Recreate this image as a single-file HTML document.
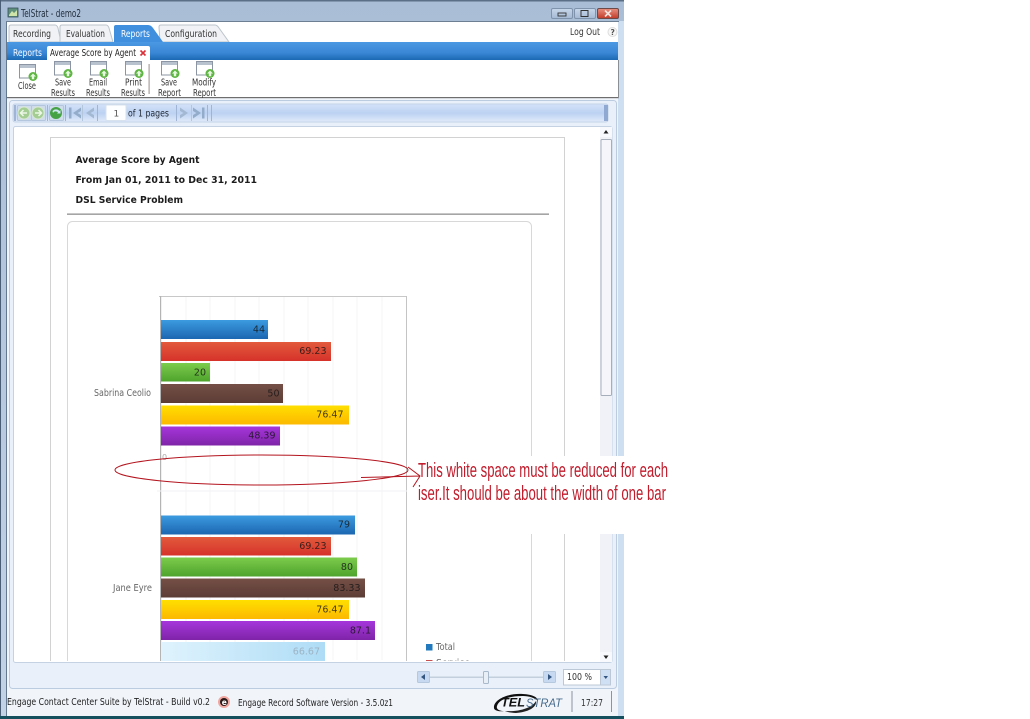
<!DOCTYPE html>
<html><head><meta charset="utf-8"><title>TelStrat - demo2</title>
<style>
html,body{margin:0;padding:0;background:#fff;width:1030px;height:719px;overflow:hidden}
svg{display:block}
text{font-family:"DejaVu Sans",sans-serif;font-size:9.5px;fill:#333}
.b{font-weight:bold;fill:#1c1c1c;font-size:10px}
.v{fill:#141414;font-size:9.5px;opacity:.8}
</style></head><body>
<svg width="1030" height="719" viewBox="0 0 1030 719" xmlns="http://www.w3.org/2000/svg">
<defs>
<linearGradient id="fr" x1="0" y1="0" x2="0" y2="1"><stop offset="0" stop-color="#a9bdd6"/><stop offset="1" stop-color="#c3d3e6"/></linearGradient>
<linearGradient id="band" x1="0" y1="0" x2="0" y2="1"><stop offset="0" stop-color="#4b98e4"/><stop offset=".6" stop-color="#3a87d6"/><stop offset="1" stop-color="#1b68b4"/></linearGradient>
<linearGradient id="pager" x1="0" y1="0" x2="0" y2="1"><stop offset="0" stop-color="#d3e2f8"/><stop offset=".5" stop-color="#bcd2f2"/><stop offset="1" stop-color="#e1ebfa"/></linearGradient>
<linearGradient id="cl" x1="0" y1="0" x2="0" y2="1"><stop offset="0" stop-color="#e89080"/><stop offset="1" stop-color="#c23a28"/></linearGradient>
<linearGradient id="btn" x1="0" y1="0" x2="0" y2="1"><stop offset="0" stop-color="#c8d7ea"/><stop offset="1" stop-color="#a4b9d3"/></linearGradient>
<linearGradient id="g0" x1="0" y1="0" x2="0" y2="1"><stop offset="0" stop-color="#3c9be0"/><stop offset="1" stop-color="#1c66b0"/></linearGradient>
<linearGradient id="g1" x1="0" y1="0" x2="0" y2="1"><stop offset="0" stop-color="#e25a3c"/><stop offset="1" stop-color="#d6322a"/></linearGradient>
<linearGradient id="g2" x1="0" y1="0" x2="0" y2="1"><stop offset="0" stop-color="#7ccb4c"/><stop offset="1" stop-color="#4ea42c"/></linearGradient>
<linearGradient id="g3" x1="0" y1="0" x2="0" y2="1"><stop offset="0" stop-color="#744f46"/><stop offset="1" stop-color="#5c3d36"/></linearGradient>
<linearGradient id="g4" x1="0" y1="0" x2="0" y2="1"><stop offset="0" stop-color="#ffdf00"/><stop offset="1" stop-color="#fcb800"/></linearGradient>
<linearGradient id="g5" x1="0" y1="0" x2="0" y2="1"><stop offset="0" stop-color="#a636dc"/><stop offset="1" stop-color="#7f24a8"/></linearGradient>
<linearGradient id="g6" x1="0" y1="0" x2="1" y2="0"><stop offset="0" stop-color="#dff3fd"/><stop offset="1" stop-color="#aedcf6"/></linearGradient>
<g id="ico">
<rect x="0.5" y="0.5" width="16" height="13.500" fill="#fff" stroke="#8b95a3"/>
<rect x="1" y="1" width="15" height="3" fill="#b8c1ce"/>
<circle cx="14" cy="12.500" r="4.500" fill="#5fb543"/>
<path d="M14 9.500l3 3h-1.800v2.800h-2.400v-2.800h-1.800z" fill="#e8f7e0"/>
</g>
<clipPath id="rep"><rect x="13" y="127" width="587" height="534"/></clipPath>
</defs>

<!-- window frame -->
<rect x="0" y="0" width="624" height="719" fill="url(#fr)"/>
<rect x="0" y="0" width="624" height="1.500" fill="#5b6f86"/>
<rect x="0" y="0" width="1" height="719" fill="#4a5f75"/>
<rect x="6" y="21" width="1" height="695" fill="#64788f"/>
<rect x="618" y="21" width="6" height="695" fill="#cfdff2"/>
<rect x="0" y="716" width="624" height="3" fill="#15505f"/>
<rect x="7" y="21" width="611" height="695" fill="#f0f5fb"/>
<rect x="6" y="21" width="613" height="1" fill="#6d7f93"/>

<!-- title bar -->
<rect x="8" y="8" width="10" height="9" fill="#5d8f7a" stroke="#3a4e5c" stroke-width=".8"/>
<path d="M9 15l3-4 2 2 3-3v6H9z" fill="#cfe4a8"/>
<text x="21" y="17" textLength="60" lengthAdjust="spacingAndGlyphs" style="font-size:10.500px;fill:#23303e">TelStrat - demo2</text>
<rect x="551.500" y="8.500" width="21" height="10" rx="1.500" fill="url(#btn)" stroke="#7f93ad"/>
<rect x="558" y="13" width="8" height="3" fill="none" stroke="#333" stroke-width=".9"/>
<rect x="574.500" y="8.500" width="21" height="10" rx="1.500" fill="url(#btn)" stroke="#7f93ad"/>
<rect x="581" y="10.500" width="7" height="6" fill="none" stroke="#333" stroke-width="1"/>
<rect x="597.500" y="8.500" width="21" height="10" rx="1.500" fill="url(#cl)" stroke="#6c4a4a"/>
<path d="M605 10.500l6 6M611 10.500l-6 6" stroke="#f4e4e0" stroke-width="1.600"/>

<!-- content top -->
<rect x="7" y="22" width="611" height="20" fill="#fff"/>
<path d="M9 42V27q0-2 2-2h44q2 0 3 3l3 14z" fill="#f0f2f5" stroke="#bcc4cc"/>
<path d="M60 42V27q0-2 2-2h44q2 0 3 3l4 14z" fill="#f0f2f5" stroke="#bcc4cc"/>
<path d="M160 42l-1-15q0-2 2-2h54q2 0 4 3l10 14z" fill="#f0f2f5" stroke="#bcc4cc"/>
<path d="M114 42V27q0-2 2-2h32q3 0 5 3l10 14z" fill="#3f8fde"/>
<text x="13" y="37" textLength="38" lengthAdjust="spacingAndGlyphs">Recording</text>
<text x="66" y="37" textLength="39" lengthAdjust="spacingAndGlyphs">Evaluation</text>
<text x="121" y="37" textLength="29" lengthAdjust="spacingAndGlyphs" style="fill:#fff">Reports</text>
<text x="165" y="37" textLength="52" lengthAdjust="spacingAndGlyphs">Configuration</text>
<text x="570" y="35" textLength="30" lengthAdjust="spacingAndGlyphs">Log Out</text>
<circle cx="612.500" cy="32" r="4.500" fill="#f7f7f7" stroke="#ddd"/>
<text x="610.500" y="35" style="font-size:7.500px;font-weight:bold;fill:#555">?</text>

<rect x="7" y="42" width="611" height="18" fill="url(#band)"/>
<path d="M47 60V48q0-2 2-2h99q2 0 2 2v12z" fill="#fff"/>
<text x="13" y="56" textLength="29" lengthAdjust="spacingAndGlyphs" style="fill:#f4f9ff">Reports</text>
<text x="50" y="56" textLength="86" lengthAdjust="spacingAndGlyphs" style="fill:#222">Average Score by Agent</text>
<path d="M140.500 50.500l5 5M145.500 50.500l-5 5" stroke="#d8323a" stroke-width="1.600"/>

<!-- toolbar -->
<rect x="7" y="60" width="611" height="37" fill="#fff"/>
<rect x="7" y="97" width="612" height="1.200" fill="#6e6e6e"/>
<rect x="618" y="60" width="1" height="38" fill="#8b9096"/>
<use href="#ico" x="19" y="64"/>
<use href="#ico" x="54" y="61"/>
<use href="#ico" x="90" y="61"/>
<use href="#ico" x="125" y="61"/>
<use href="#ico" x="161" y="61"/>
<use href="#ico" x="196" y="61"/>
<rect x="148.500" y="64" width="1.200" height="30" fill="#a9a09c"/>
<text x="18" y="89" textLength="18" lengthAdjust="spacingAndGlyphs">Close</text>
<text x="55" y="85.500" textLength="16" lengthAdjust="spacingAndGlyphs">Save</text>
<text x="51" y="96" textLength="24" lengthAdjust="spacingAndGlyphs">Results</text>
<text x="89" y="85.500" textLength="18" lengthAdjust="spacingAndGlyphs">Email</text>
<text x="86" y="96" textLength="24" lengthAdjust="spacingAndGlyphs">Results</text>
<text x="125" y="85.500" textLength="17" lengthAdjust="spacingAndGlyphs">Print</text>
<text x="121" y="96" textLength="24" lengthAdjust="spacingAndGlyphs">Results</text>
<text x="161" y="85.500" textLength="16" lengthAdjust="spacingAndGlyphs">Save</text>
<text x="158" y="96" textLength="23" lengthAdjust="spacingAndGlyphs">Report</text>
<text x="192" y="85.500" textLength="24" lengthAdjust="spacingAndGlyphs">Modify</text>
<text x="193" y="96" textLength="23" lengthAdjust="spacingAndGlyphs">Report</text>

<!-- main panel -->
<rect x="9.500" y="100.500" width="607" height="588" rx="3" fill="#e9f0fa" stroke="#bccce0"/>
<!-- pager -->
<rect x="13" y="104" width="595" height="18" rx="2" fill="url(#pager)" stroke="#c5d4e8"/>
<rect x="604" y="105" width="4" height="16" fill="#8fa9d2"/>
<rect x="14" y="105" width="2" height="16" fill="#9fb5d3"/>
<rect x="17.500" y="105.500" width="14" height="15" rx="1" fill="#cfdcec" stroke="#b4c6dc"/>
<rect x="31.500" y="105.500" width="14" height="15" rx="1" fill="#cfdcec" stroke="#b4c6dc"/>
<circle cx="24" cy="113" r="6" fill="#a3cd93" stroke="#d8e8d0"/>
<path d="M27 113h-6m2.500-3l-3 3 3 3" fill="none" stroke="#edf7e6" stroke-width="1.500"/>
<circle cx="38" cy="113" r="6" fill="#a3cd93" stroke="#d8e8d0"/>
<path d="M35 113h6m-2.500-3l3 3-3 3" fill="none" stroke="#edf7e6" stroke-width="1.500"/>
<rect x="47" y="105" width="1" height="16" fill="#9fb5d3"/>
<rect x="49.500" y="105.500" width="14" height="15" rx="1" fill="#cfdcec" stroke="#b4c6dc"/>
<circle cx="56" cy="113" r="6" fill="#45a345"/>
<path d="M52.500 111a4.500 4.500 0 0 1 7 0l1-1v3.500h-3.500l1-1a3 3 0 0 0-5 .5z" fill="#cfe6f5"/>
<rect x="65" y="105" width="1" height="16" fill="#9fb5d3"/>
<path d="M69 107.500h2.500v11H69zM81 107.500l-8 5.500 8 5.500v-3.500l-3.500-2 3.500-2z" fill="#93acca"/>
<rect x="82" y="105" width="1" height="16" fill="#b4c6dc"/>
<path d="M94 107.500l-8 5.500 8 5.500v-3.500l-3.500-2 3.500-2z" fill="#a3b8d2"/>
<rect x="97" y="105" width="1" height="16" fill="#9fb5d3"/>
<rect x="106" y="105" width="20" height="15.500" rx="1" fill="#fdfeff" stroke="#d8e2ee"/>
<text x="113.500" y="116.500" style="font-size:9px;fill:#555">1</text>
<text x="128" y="116.500" textLength="41" lengthAdjust="spacingAndGlyphs" style="fill:#1f2630;font-size:10px">of 1 pages</text>
<rect x="176" y="105" width="1" height="16" fill="#9fb5d3"/>
<path d="M180 107.500l8 5.500-8 5.500v-3.500l3.500-2-3.500-2z" fill="#a3b8d2"/>
<rect x="191" y="105" width="1" height="16" fill="#b4c6dc"/>
<path d="M193 107.500l8 5.500-8 5.500v-3.500l3.500-2-3.500-2zM202 107.500h2.500v11H202z" fill="#93acca"/>
<rect x="207" y="105" width="1" height="16" fill="#9fb5d3"/>
<rect x="211" y="105" width="1" height="16" fill="#9fb5d3"/>

<!-- report viewport -->
<rect x="13.500" y="126.500" width="598.500" height="536" rx="2" fill="#fff" stroke="#c4d2e4"/>
<g clip-path="url(#rep)">
<rect x="50.500" y="137.500" width="514" height="540" fill="#fff" stroke="#d2d2d2"/>
<text class="b" x="75.500" y="163" textLength="124" lengthAdjust="spacingAndGlyphs">Average Score by Agent</text>
<text class="b" x="75.500" y="183" textLength="181.500" lengthAdjust="spacingAndGlyphs">From Jan 01, 2011 to Dec 31, 2011</text>
<text class="b" x="75.500" y="203" textLength="107.500" lengthAdjust="spacingAndGlyphs">DSL Service Problem</text>
<rect x="67" y="213.500" width="482" height="1.300" fill="#8f8f8f"/>
<rect x="67.500" y="221.500" width="464" height="460" rx="5" fill="#fff" stroke="#d8d8d8"/>

<!-- chart -->
<g stroke="#f6f6f6" stroke-width="1">
<path d="M186 297V660M210 297V660M235 297V660M259 297V660M284 297V660M308 297V660M333 297V660M357 297V660M382 297V660"/>
</g>
<rect x="159" y="296" width="248" height="1" fill="#c8c8c8"/>
<rect x="160" y="296" width="1.200" height="366" fill="#b4b4b4"/>
<rect x="406" y="296" width="1" height="366" fill="#c4c4c4"/>
<rect x="157" y="490.500" width="250" height="1" fill="#f0f2f6"/>

<rect x="161" y="320" width="107" height="19" fill="url(#g0)"/>
<rect x="161" y="342" width="170" height="19" fill="url(#g1)"/>
<rect x="161" y="363" width="49" height="18.500" fill="url(#g2)"/>
<rect x="161" y="384" width="122" height="19" fill="url(#g3)"/>
<rect x="161" y="405.500" width="188" height="19" fill="url(#g4)"/>
<rect x="161" y="426.500" width="119" height="19" fill="url(#g5)"/>
<text class="v" x="265" y="332.500" text-anchor="end">44</text>
<text class="v" x="326.500" y="354" text-anchor="end">69.23</text>
<text class="v" x="206" y="375.500" text-anchor="end">20</text>
<text class="v" x="279.500" y="396.500" text-anchor="end">50</text>
<text class="v" x="343.500" y="417.500" text-anchor="end">76.47</text>
<text class="v" x="275.500" y="438.500" text-anchor="end">48.39</text>
<text x="162" y="460" style="font-size:8px;fill:#aaa">0</text>

<rect x="161" y="515.500" width="194" height="19" fill="url(#g0)"/>
<rect x="161" y="537" width="170" height="18.500" fill="url(#g1)"/>
<rect x="161" y="557.500" width="196" height="19" fill="url(#g2)"/>
<rect x="161" y="578.500" width="204" height="19" fill="url(#g3)"/>
<rect x="161" y="600" width="188" height="19" fill="url(#g4)"/>
<rect x="161" y="621" width="214" height="19" fill="url(#g5)"/>
<rect x="161" y="642" width="164" height="20" fill="url(#g6)"/>
<text class="v" x="350" y="527.500" text-anchor="end">79</text>
<text class="v" x="326.500" y="549" text-anchor="end">69.23</text>
<text class="v" x="353" y="570" text-anchor="end">80</text>
<text class="v" x="360.500" y="591" text-anchor="end">83.33</text>
<text class="v" x="343.500" y="612.500" text-anchor="end">76.47</text>
<text class="v" x="371" y="633.500" text-anchor="end">87.1</text>
<text x="320" y="654.500" text-anchor="end" style="font-size:9.500px;fill:#9db4c4">66.67</text>

<text x="94" y="396" textLength="57" lengthAdjust="spacingAndGlyphs" style="fill:#666">Sabrina Ceolio</text>
<text x="113" y="591" textLength="39" lengthAdjust="spacingAndGlyphs" style="fill:#666">Jane Eyre</text>
<rect x="426" y="644" width="6.500" height="6.500" fill="#2279bd"/>
<text x="436" y="650" textLength="19" lengthAdjust="spacingAndGlyphs" style="fill:#666">Total</text>
<rect x="426" y="660" width="6.500" height="6.500" fill="#c65050"/>
<text x="436" y="666" textLength="34" lengthAdjust="spacingAndGlyphs" style="fill:#666">Service</text>
</g>

<!-- scrollbar -->
<rect x="600" y="127" width="12" height="535" fill="#f1f1f8"/>
<rect x="600" y="127" width="12" height="10" fill="#f8f9fc"/>
<path d="M606 130l2.500 3.500h-5z" fill="#222"/>
<rect x="601" y="139.500" width="10.500" height="256" rx="1" fill="#f6f6fa" stroke="#a6aebb"/>
<rect x="600" y="652" width="12" height="10" fill="#f8f9fc"/>
<path d="M606 659l2.500-3.500h-5z" fill="#222"/>

<!-- slider / zoom -->
<rect x="417.500" y="671.500" width="12" height="11" rx="1" fill="#c6d9f0" stroke="#b6c8de"/>
<path d="M421 677l4-3v6z" fill="#33557f"/>
<rect x="430" y="676.500" width="113" height="1.500" fill="#c3cfdc"/>
<rect x="483.500" y="671.500" width="5" height="12" rx="1" fill="#e9eff7" stroke="#a9b9cc"/>
<rect x="543.500" y="671.500" width="12" height="11" rx="1" fill="#c6d9f0" stroke="#b6c8de"/>
<path d="M552 677l-4-3v6z" fill="#33557f"/>
<rect x="563.500" y="669.500" width="37" height="15.500" fill="#fff" stroke="#bcc8d6"/>
<rect x="600.500" y="669.500" width="10" height="15.500" fill="#cfe0f4" stroke="#bcc8d6"/>
<path d="M603.500 676h4.500l-2.200 3z" fill="#33557f"/>
<text x="567" y="680" textLength="25" lengthAdjust="spacingAndGlyphs" style="fill:#333">100 %</text>

<!-- status bar -->
<rect x="7" y="690" width="611" height="26" fill="#f1f5fa"/>
<text x="7" y="705" textLength="203" lengthAdjust="spacingAndGlyphs" style="fill:#222">Engage Contact Center Suite by TelStrat - Build v0.2</text>
<circle cx="224" cy="702" r="6" fill="#f2a6a0"/>
<circle cx="224" cy="702" r="4" fill="#2a1a1a"/>
<text x="221.700" y="705" style="font-size:7.500px;font-weight:bold;fill:#fff">e</text>
<text x="238" y="706" textLength="155" lengthAdjust="spacingAndGlyphs" style="fill:#222">Engage Record Software Version - 3.5.0z1</text>
<!-- logo -->
<path d="M494 708c-1-8 13-15 29-14 9 .5 15 3 15 7-3-3-9-5-15-5-13 0-24 3-26 10-1 3 2 5 7 5-6 1-10-1-10-3z" fill="#111"/>
<path d="M505 711c14 1 27-3 31-10 1 6-7 11-20 12-5 0-9-1-11-2z" fill="#222"/>
<text x="501" y="706.500" textLength="24" lengthAdjust="spacingAndGlyphs" style="font-family:'Liberation Sans',sans-serif;font-size:11.500px;font-weight:bold;font-style:italic;fill:#111">TEL</text>
<text x="526" y="707" textLength="36" lengthAdjust="spacingAndGlyphs" style="font-family:'Liberation Sans',sans-serif;font-size:12px;font-style:italic;fill:#4a6c8c">STRAT</text>
<rect x="571.500" y="691" width="1" height="21" fill="#8c949c"/>
<rect x="611" y="691" width="1" height="21" fill="#8c949c"/>
<text x="581" y="706" textLength="22" lengthAdjust="spacingAndGlyphs" style="fill:#333">17:27</text>

<!-- annotation patch -->
<rect x="418" y="456" width="252" height="78" fill="#fff"/>
<ellipse cx="261.500" cy="470" rx="146.500" ry="15" fill="none" stroke="#b3141e" stroke-width="1"/>
<path d="M361 477.500L420 476M408 467l12 9-7 11" fill="none" stroke="#b3141e" stroke-width="1"/>
<text x="418" y="477" textLength="250" lengthAdjust="spacingAndGlyphs" style="font-family:'Liberation Sans',sans-serif;font-size:20px;fill:#c01c2c">This white space must be reduced for each</text>
<text x="418" y="500" textLength="248" lengthAdjust="spacingAndGlyphs" style="font-family:'Liberation Sans',sans-serif;font-size:20px;fill:#c01c2c">iser.It should be about the width of one bar</text>
</svg>
</body></html>
